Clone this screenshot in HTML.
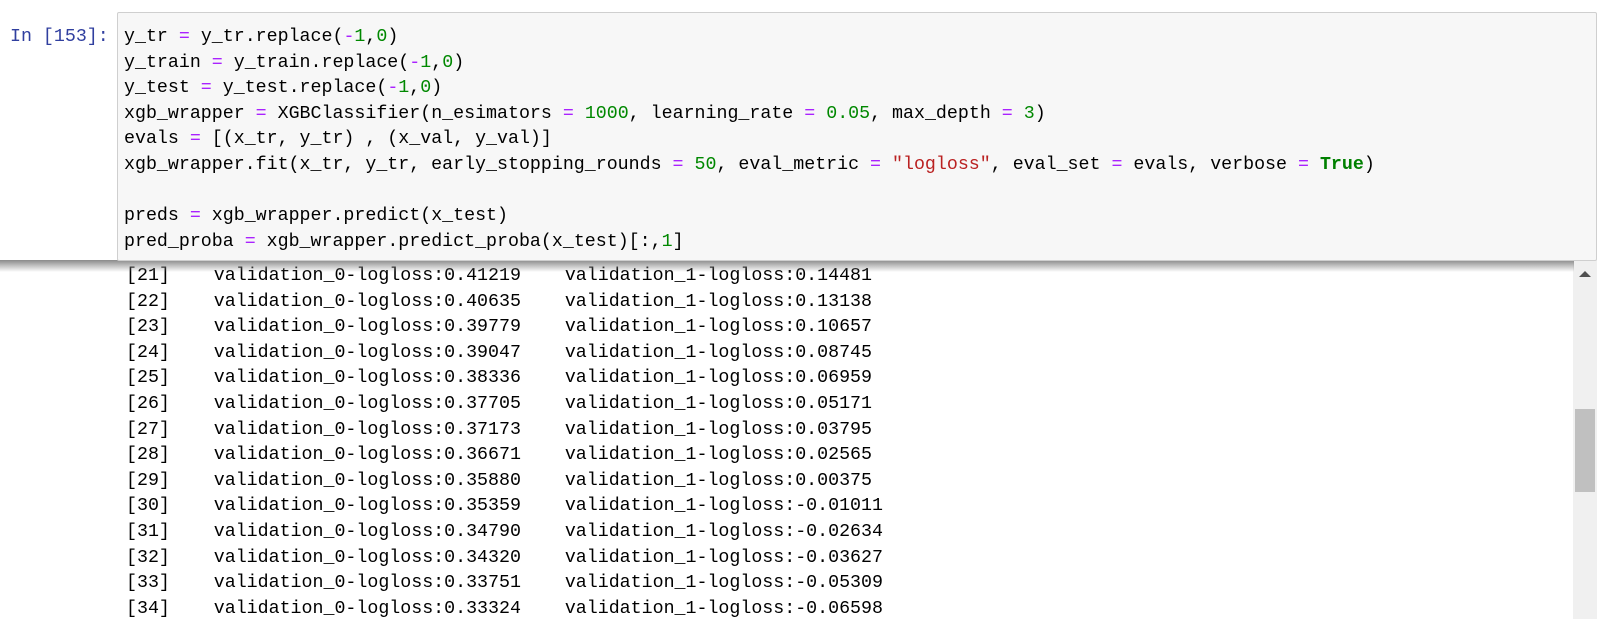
<!DOCTYPE html>
<html><head><meta charset="utf-8"><style>
body{margin:0;width:1615px;height:619px;background:#fff;overflow:hidden;position:relative;font-family:"Liberation Mono","Noto Sans CJK KR",monospace;}
pre{margin:0;font-family:"Liberation Mono","Noto Sans CJK KR",monospace;font-size:18.3px;line-height:25.6px;tab-size:8;-moz-tab-size:8;color:#000}
.prompt{position:absolute;left:10px;top:25px;color:#303F9F;font-size:18.3px;line-height:25.6px}
.cell{position:absolute;left:117px;top:12px;width:1478px;height:247px;background:#f7f7f7;border:1px solid #cfcfcf;border-radius:2px;z-index:2}
.cell pre{position:absolute;left:6px;top:12px}
.o{color:#aa22ff}.n{color:#008800}.s{color:#ba2121}.k{color:#008000;font-weight:bold}
.shadow{position:absolute;left:0;top:260px;width:1574px;height:12px;background:linear-gradient(#8a8a8a,rgba(255,255,255,0));z-index:1}
.out{position:absolute;left:126px;top:264px}
.sb{position:absolute;left:1573px;top:260px;width:24px;height:359px;background:#f0f0f0}
.thumb{position:absolute;left:2px;top:149px;width:20px;height:83px;background:#c0c0c0}
.arr{position:absolute;left:6px;top:11px;width:0;height:0;border-left:6px solid transparent;border-right:6px solid transparent;border-bottom:6px solid #505050}
</style></head><body>
<div class="prompt">In [153]:</div>
<div class="cell"><pre>y_tr <span class="o">=</span> y_tr.replace(<span class="o">-</span><span class="n">1</span>,<span class="n">0</span>)
y_train <span class="o">=</span> y_train.replace(<span class="o">-</span><span class="n">1</span>,<span class="n">0</span>)
y_test <span class="o">=</span> y_test.replace(<span class="o">-</span><span class="n">1</span>,<span class="n">0</span>)
xgb_wrapper <span class="o">=</span> XGBClassifier(n_esimators <span class="o">=</span> <span class="n">1000</span>, learning_rate <span class="o">=</span> <span class="n">0.05</span>, max_depth <span class="o">=</span> <span class="n">3</span>)
evals <span class="o">=</span> [(x_tr, y_tr) , (x_val, y_val)]
xgb_wrapper.fit(x_tr, y_tr, early_stopping_rounds <span class="o">=</span> <span class="n">50</span>, eval_metric <span class="o">=</span> <span class="s">"logloss"</span>, eval_set <span class="o">=</span> evals, verbose <span class="o">=</span> <span class="k">True</span>)

preds <span class="o">=</span> xgb_wrapper.predict(x_test)
pred_proba <span class="o">=</span> xgb_wrapper.predict_proba(x_test)[:,<span class="n">1</span>]</pre></div>
<div class="shadow"></div>
<pre class="out">[21]	validation_0-logloss:0.41219	validation_1-logloss:0.14481
[22]	validation_0-logloss:0.40635	validation_1-logloss:0.13138
[23]	validation_0-logloss:0.39779	validation_1-logloss:0.10657
[24]	validation_0-logloss:0.39047	validation_1-logloss:0.08745
[25]	validation_0-logloss:0.38336	validation_1-logloss:0.06959
[26]	validation_0-logloss:0.37705	validation_1-logloss:0.05171
[27]	validation_0-logloss:0.37173	validation_1-logloss:0.03795
[28]	validation_0-logloss:0.36671	validation_1-logloss:0.02565
[29]	validation_0-logloss:0.35880	validation_1-logloss:0.00375
[30]	validation_0-logloss:0.35359	validation_1-logloss:-0.01011
[31]	validation_0-logloss:0.34790	validation_1-logloss:-0.02634
[32]	validation_0-logloss:0.34320	validation_1-logloss:-0.03627
[33]	validation_0-logloss:0.33751	validation_1-logloss:-0.05309
[34]	validation_0-logloss:0.33324	validation_1-logloss:-0.06598</pre>
<div class="sb"><div class="arr"></div><div class="thumb"></div></div>
</body></html>
